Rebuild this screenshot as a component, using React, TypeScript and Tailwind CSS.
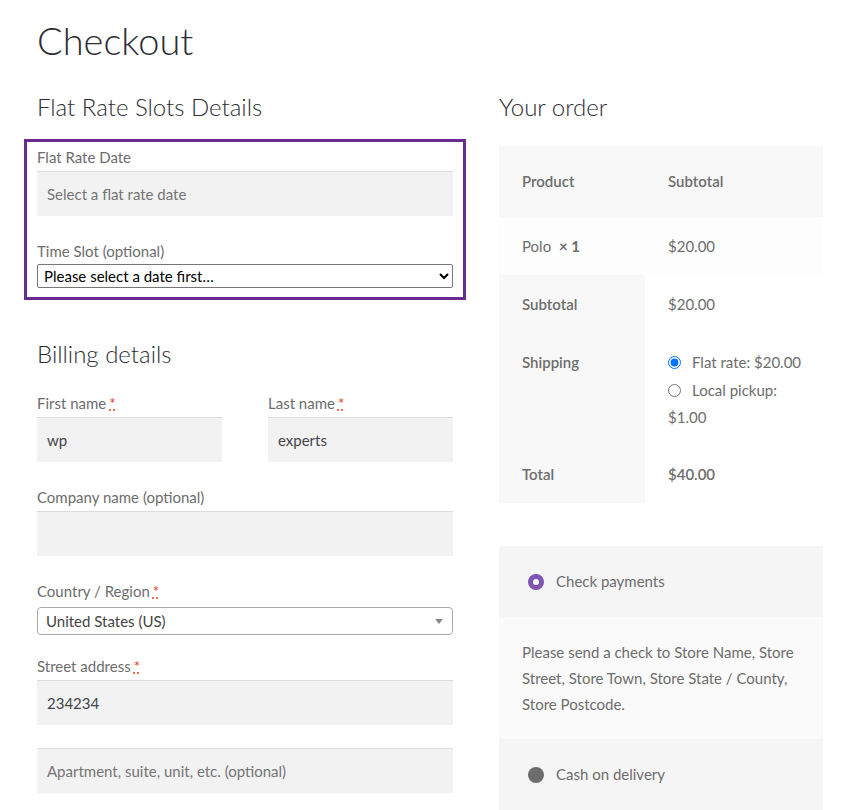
import React from 'react';

const font = { fontFamily: 'Lato, "Liberation Sans", sans-serif' };

function Req() {
  return (
    <abbr className="ml-[3px] text-[#e2401c] no-underline" style={{ textDecoration: 'underline dotted' }} title="required">
      *
    </abbr>
  );
}

function Label({ children, req }: { children: React.ReactNode; req?: boolean }) {
  return (
    <label className="block text-[15px] leading-[24px] text-[#6d6d6d]">
      {children}
      {req && <Req />}
    </label>
  );
}

function TextBox({ value, placeholder }: { value?: string; placeholder?: string }) {
  return (
    <div className="flex h-[45px] items-center border-t border-[#dcdcdc] bg-[#f2f2f2] px-[10px] text-[15px]">
      {value ? <span className="text-[#43454b]">{value}</span> : <span className="text-[#757575]">{placeholder}</span>}
    </div>
  );
}

export default function App() {
  return (
    <div className="min-h-screen bg-white" style={font}>
      <div className="flex gap-[46px] pl-[37px] pt-[14px]">
        {/* left column */}
        <div className="w-[416px]">
          <h1 className="text-[38px] font-light leading-[52px] text-[#2c2d33]">Checkout</h1>

          <h3 className="mt-[25px] text-[24px] font-light leading-[32px] text-[#2c2d33]">Flat Rate Slots Details</h3>

          <div className="-mx-[13px] mt-[16px] border-[3px] border-[#6a2b8f] px-[10px] pb-[9px] pt-[3px]">
            <Label>Flat Rate Date</Label>
            <div className="mt-[2px]">
              <TextBox placeholder="Select a flat rate date" />
            </div>
            <div className="mt-[23px]">
              <Label>Time Slot (optional)</Label>
            </div>
            <select className="mt-[1px] block h-[24px] w-full rounded-[2px] border border-[#767676] bg-white px-[2px] text-[15px] text-black" style={font}>
              <option>Please select a date first…</option>
            </select>
          </div>

          <h3 className="mt-[38px] text-[24px] font-light leading-[32px] text-[#2c2d33]">Billing details</h3>

          <div className="mt-[21px] flex gap-[46px]">
            <div className="w-[185px]">
              <Label req>First name</Label>
              <div className="mt-[2px]"><TextBox value="wp" /></div>
            </div>
            <div className="flex-1">
              <Label req>Last name</Label>
              <div className="mt-[2px]"><TextBox value="experts" /></div>
            </div>
          </div>

          <div className="mt-[23px]">
            <Label>Company name (optional)</Label>
            <div className="mt-[2px]"><TextBox /></div>
          </div>

          <div className="mt-[23px]">
            <Label req>Country / Region</Label>
            <div className="mt-[4px] flex h-[28px] items-center justify-between rounded-[4px] border border-[#aaa] bg-white pl-[8px] pr-[9px] text-[15px] text-[#444]">
              <span>United States (US)</span>
              <span className="h-0 w-0 border-x-[4px] border-t-[5px] border-x-transparent border-t-[#888]" />
            </div>
          </div>

          <div className="mt-[19px]">
            <Label req>Street address</Label>
            <div className="mt-[2px]"><TextBox value="234234" /></div>
          </div>
          <div className="mt-[23px]">
            <TextBox placeholder="Apartment, suite, unit, etc. (optional)" />
          </div>
        </div>

        {/* right column */}
        <div className="w-[324px]">
          <h3 className="mt-[77px] text-[24px] font-light leading-[32px] text-[#2c2d33]">Your order</h3>

          <div className="mt-[23px] text-[15px] text-[#6d6d6d]">
            <div className="flex h-[71px] items-center bg-[#f8f8f8] font-semibold">
              <div className="w-[146px] pl-[23px]">Product</div>
              <div className="pl-[23px]">Subtotal</div>
            </div>
            <div className="flex h-[58px] items-center bg-[#fdfdfd]">
              <div className="w-[146px] pl-[23px]">
                Polo <strong className="ml-[4px] font-bold">× 1</strong>
              </div>
              <div className="pl-[23px]">$20.00</div>
            </div>
            <div className="flex">
              <div className="w-[146px] bg-[#f8f8f8] font-semibold">
                <div className="flex h-[58px] items-center pl-[23px]">Subtotal</div>
                <div className="h-[112px] pl-[23px] pt-[17px] leading-[24px]">Shipping</div>
                <div className="flex h-[58px] items-center pl-[23px]">Total</div>
              </div>
              <div className="flex-1 bg-white">
                <div className="flex h-[58px] items-center pl-[23px]">$20.00</div>
                <div className="h-[112px] pl-[23px] pr-[16px] pt-[17px]">
                  <div className="flex items-center whitespace-nowrap leading-[24px]">
                    <input type="radio" checked readOnly className="m-0 mr-[11px] h-[13px] w-[13px]" />
                    Flat rate: $20.00
                  </div>
                  <div className="mt-[3px] leading-[27px]">
                    <input type="radio" readOnly className="m-0 mr-[11px] inline-block h-[13px] w-[13px] align-[-1px]" />
                    Local pickup: $1.00
                  </div>
                </div>
                <div className="flex h-[58px] items-center pl-[23px] font-semibold">$40.00</div>
              </div>
            </div>
          </div>

          <div className="mt-[43px] text-[15px] text-[#6d6d6d]">
            <div className="flex h-[71px] items-center bg-[#f5f5f5] pl-[29px]">
              <span className="mr-[12px] flex h-[16px] w-[16px] items-center justify-center rounded-full bg-[#7f54b3]">
                <span className="h-[6px] w-[6px] rounded-full bg-white" />
              </span>
              Check payments
            </div>
            <div className="bg-[#fafafa] px-[23px] py-[22px] leading-[26px]">
              Please send a check to Store Name, Store Street, Store Town, Store State / County, Store Postcode.
            </div>
            <div className="flex h-[71px] items-center bg-[#f5f5f5] pl-[29px]">
              <span className="mr-[12px] h-[16px] w-[16px] rounded-full bg-[#6d6d6d]" />
              Cash on delivery
            </div>
          </div>
        </div>
      </div>
    </div>
  );
}
